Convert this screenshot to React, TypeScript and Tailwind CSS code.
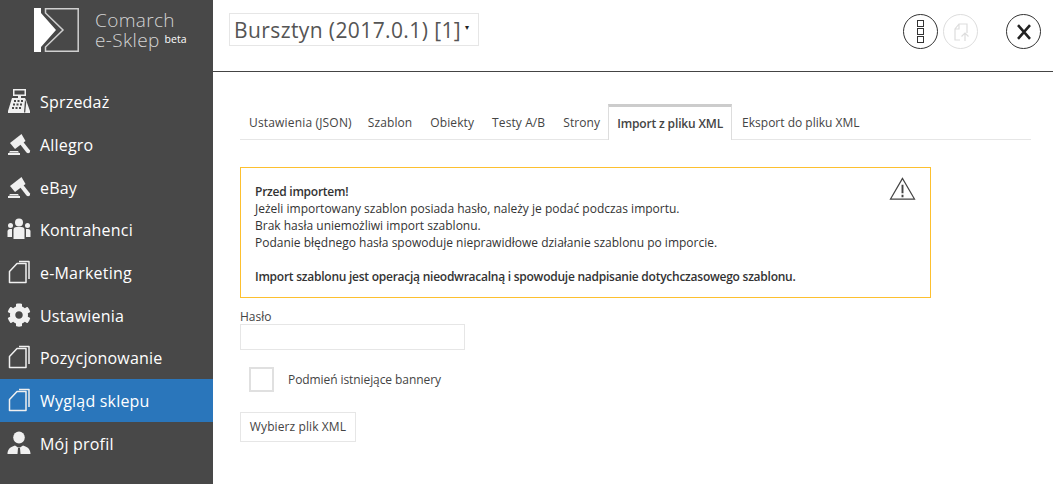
import React from 'react'
import { FaCog } from 'react-icons/fa'

function Register() {
  return (
    <svg viewBox="0 0 24 24" className="w-[24px] h-[24px]" fill="#f0f0f0">
      <path fillRule="evenodd" d="M6 0h13v7h-5v2h4l1 2 4 11v2H1v-2L5 9h6V7H6zm1.500 1.500v4h10v-4z" />
      <g fill="#484848">
        <rect x="7" y="11" width="2" height="2" />
        <rect x="10.500" y="11" width="2" height="2" />
        <rect x="14" y="11" width="2" height="2" />
        <rect x="6" y="14.500" width="2" height="2" />
        <rect x="9.500" y="14.500" width="2" height="2" />
        <rect x="13" y="14.500" width="2" height="2" />
        <rect x="5" y="18" width="2" height="2" />
        <rect x="8.500" y="18" width="2" height="2" />
        <rect x="12" y="18" width="2" height="2" />
        <path d="M18 10.500l-1 13h1.200l1-10z" />
      </g>
    </svg>
  )
}

function Gavel() {
  return (
    <svg viewBox="0 0 24 24" className="w-[24px] h-[24px]" fill="#f0f0f0">
      <path d="M14.500 2 18.500 9 8 17 3 11z" />
      <path d="M12.500 11.500 15.500 9 23 18.500q.5 2-1 2.500t-2.500-.5z" />
      <path d="M3 19h8l1 1.500H2zM1 21h12v2H1z" />
    </svg>
  )
}

function People() {
  return (
    <svg viewBox="0 0 24 24" className="w-[24px] h-[24px]" fill="#f0f0f0">
      <circle cx="12" cy="5.500" r="4" />
      <path d="M6.500 22v-9q0-3 3-3h5q3 0 3 3v9z" />
      <circle cx="3.500" cy="8.500" r="2.500" />
      <circle cx="20.500" cy="8.500" r="2.500" />
      <path d="M.5 20v-5.500q0-2.500 2.500-2.500h2v8z" />
      <path d="M23.500 20v-5.500q0-2.500-2.500-2.500h-2v8z" />
    </svg>
  )
}

function Pages() {
  return (
    <svg viewBox="0 0 24 24" className="w-[24px] h-[24px]" fill="none" stroke="#f0f0f0" strokeWidth="1.500" strokeLinejoin="round">
      <path d="M2.500 11.500 10 3.500h9V22.500H2.500z" />
      <path d="M12 1.500h10V19" />
    </svg>
  )
}

function Person() {
  return (
    <svg viewBox="0 0 24 24" className="w-[24px] h-[24px]" fill="#f0f0f0">
      <ellipse cx="12" cy="6.500" rx="5.800" ry="6" />
      <path d="M.5 23c0-4 2-7 7.500-8.500l3 2h2l3-2c5.500 1.500 7.500 4.500 7.500 8.500z" />
      <path d="M11 17h2l.5 6h-3z" fill="#484848" />
    </svg>
  )
}

const menu = [
  { label: 'Sprzedaż', icon: <Register /> },
  { label: 'Allegro', icon: <Gavel /> },
  { label: 'eBay', icon: <Gavel /> },
  { label: 'Kontrahenci', icon: <People /> },
  { label: 'e-Marketing', icon: <Pages /> },
  { label: 'Ustawienia', icon: <FaCog className="text-[#f0f0f0] text-[24px]" /> },
  { label: 'Pozycjonowanie', icon: <Pages /> },
  { label: 'Wygląd sklepu', icon: <Pages />, active: true },
  { label: 'Mój profil', icon: <Person /> },
]

const tabs = ['Ustawienia (JSON)', 'Szablon', 'Obiekty', 'Testy A/B', 'Strony', 'Import z pliku XML', 'Eksport do pliku XML']

function Logo() {
  return (
    <svg viewBox="0 0 45 44" className="w-[45px] h-[44px]">
      <path d="M0 0h7v5l15 17L7 39v5H0z" fill="#fff" />
      <path d="M11.500.8H44.200V43.200H11.500V39L29 22 11.500 5z" fill="none" stroke="#d0d0d0" strokeWidth="1.500" />
    </svg>
  )
}

function App(): React.ReactElement {
  return (
    <div className="w-[1053px] h-[484px] flex overflow-hidden bg-white font-['Open_Sans',sans-serif] text-[#444]">
      <aside className="w-[213px] shrink-0 bg-[#484848] text-white">
        <div className="h-[80px] pl-[34px] pt-[8px] flex">
          <Logo />
          <div className="ml-[16px] mt-[2px] text-[#d4d4d4] text-[19px] leading-[20px] font-light tracking-[.35px]">
            <div>Comarch</div>
            <div className="flex items-start">
              e-Sklep
              <span className="ml-[5px] mt-[2px] text-[10.500px] leading-[14px] tracking-normal text-white font-normal">beta</span>
            </div>
          </div>
        </div>
        {menu.map((m) => (
          <div key={m.label} className={`h-[42.7px] flex items-center pl-[7px] gap-[9px] text-[16px] tracking-[.2px] ${m.active ? 'bg-[#2a76bb]' : ''}`}>
            <span className="w-[24px] flex justify-center">{m.icon}</span>
            <span className="pt-[2px]">{m.label}</span>
          </div>
        ))}
      </aside>
      <main className="flex-1 min-w-0">
        <header className="h-[72px] border-b border-[#444] flex items-start relative">
          <div className="ml-[16px] mt-[13px] h-[33px] w-[250px] border border-[#e6e6e6] flex pl-[4px] pt-[1px] text-[21px] leading-[31px] tracking-[.4px] text-[#555]">
            <span>Bursztyn (2017.0.1) [1]</span>
            <span className="ml-[4px] text-[8px] leading-[24px] text-[#222]">▾</span>
          </div>
          <div className="ml-auto mr-[12px] mt-[14px] flex items-center">
            <div className="w-[35px] h-[35px] rounded-full border border-[#333] flex flex-col items-center justify-center gap-[1px]">
              <span className="w-[7px] h-[7px] border border-[#333]" />
              <span className="w-[7px] h-[7px] border border-[#333]" />
              <span className="w-[7px] h-[7px] border border-[#333]" />
            </div>
            <div className="ml-[5px] w-[35px] h-[35px] rounded-full border border-[#ddd] flex items-center justify-center">
              <svg viewBox="0 0 20 20" className="w-[20px] h-[20px]" fill="none" stroke="#ddd" strokeWidth="1.200">
                <path d="M9 18H4V7l4-5h8v9M8 2v5H4" />
                <path d="M14 19v-8M10.500 14.500 14 11l3.500 3.500" />
              </svg>
            </div>
            <div className="ml-[28px] w-[35px] h-[35px] rounded-full border border-[#333] flex items-center justify-center">
              <svg viewBox="0 0 20 20" className="w-[16px] h-[16px]" fill="none" stroke="#222" strokeWidth="3.200">
                <path d="M2.500 1.500 17.500 18.500M17.500 1.500 2.500 18.500" />
              </svg>
            </div>
          </div>
        </header>
        <div className="pl-[27px] pr-[22px] pt-[32px] text-[12px]">
          <div className="flex h-[36px] border-b border-[#e6e6e6]">
            {tabs.map((t) => (
              <div
                key={t}
                className={
                  t === 'Import z pliku XML'
                    ? 'h-[36px] ml-[-1px] px-[8px] pt-[8px] border-x border-[#ddd] border-t-[3px] border-t-[#ccc] bg-white font-semibold tracking-[-.15px]'
                    : t === 'Ustawienia (JSON)'
                      ? 'pl-[9px] pr-[7px] pt-[10px] tracking-[.17px]'
                      : t === 'Eksport do pliku XML'
                        ? 'pl-[10px] pt-[10px]'
                        : 'px-[9px] pt-[10px] tracking-[.1px]'
                }
              >
                {t}
              </div>
            ))}
          </div>
          <div className="relative mt-[27px] w-[691px] h-[131px] border border-[#fdc02f] pl-[14px] pt-[15px] leading-[17px] text-[#333]">
            <div className="font-semibold tracking-[-.25px]">Przed importem!</div>
            <div>Jeżeli importowany szablon posiada hasło, należy je podać podczas importu.</div>
            <div>Brak hasła uniemożliwi import szablonu.</div>
            <div>Podanie błędnego hasła spowoduje nieprawidłowe działanie szablonu po imporcie.</div>
            <div className="mt-[17px] font-semibold tracking-[-.25px]">Import szablonu jest operacją nieodwracalną i spowoduje nadpisanie dotychczasowego szablonu.</div>
            <svg viewBox="0 0 28 24" className="absolute right-[14px] top-[9px] w-[27px] h-[23px]" fill="none" stroke="#444" strokeWidth="1.300">
              <path d="M14 1.500 1.500 23h25z" />
              <path d="M14 8v9M14 18.500v2.500" strokeWidth="2" />
            </svg>
          </div>
          <div className="mt-[11px] leading-[15px]">Hasło</div>
          <div className="w-[225px] h-[26px] border border-[#e6e6e6]" />
          <div className="mt-[17px] ml-[9px] flex items-center">
            <span className="w-[25px] h-[25px] border-2 border-[#e0e0e0]" />
            <span className="ml-[14px] tracking-[-.08px]">Podmień istniejące bannery</span>
          </div>
          <div className="mt-[20px] w-[116px] h-[30px] border border-[#e6e6e6] flex items-center justify-center tracking-[.1px]">Wybierz plik XML</div>
        </div>
      </main>
    </div>
  )
}

export default App
